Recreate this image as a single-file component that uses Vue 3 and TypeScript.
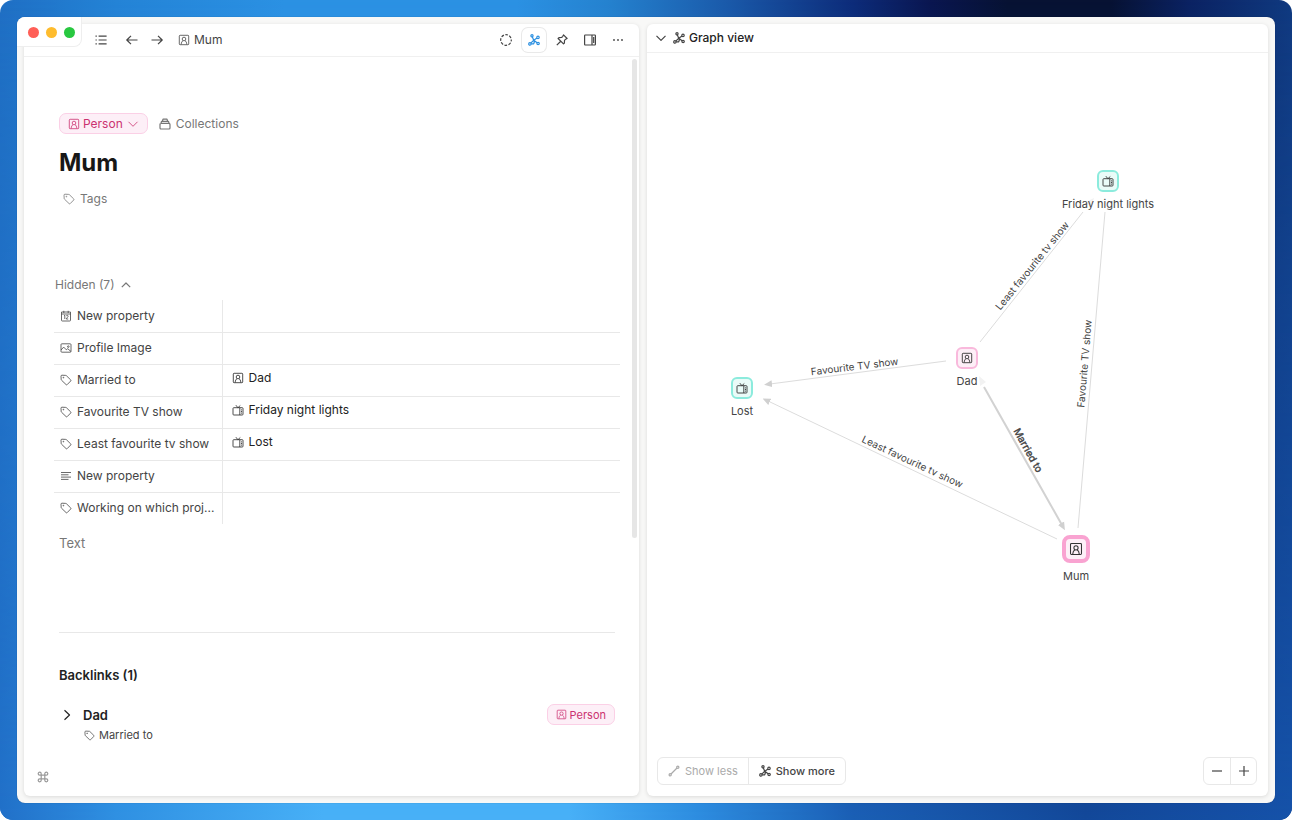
<script setup lang="ts">
import { ref } from 'vue'

interface Property {
  icon: string
  name: string
  value?: string
  valueIcon?: string
}

interface GraphNode {
  label: string
  icon: string
  kind: 'show' | 'person'
  x: number
  y: number
  active?: boolean
}

interface Edge {
  line: [number, number, number, number]
  tip?: boolean
  double?: boolean
  label: string
  x: number
  y: number
  angle: number
}

const properties: Property[] = [
  { icon: 'calendar', name: 'New property' },
  { icon: 'image', name: 'Profile Image' },
  { icon: 'tag', name: 'Married to', value: 'Dad', valueIcon: 'person' },
  { icon: 'tag', name: 'Favourite TV show', value: 'Friday night lights', valueIcon: 'tv' },
  { icon: 'tag', name: 'Least favourite tv show', value: 'Lost', valueIcon: 'tv' },
  { icon: 'text', name: 'New property' },
  { icon: 'tag', name: 'Working on which proj...' },
]

const nodes: GraphNode[] = [
  { label: 'Friday night lights', icon: 'tv', kind: 'show', x: 461, y: 128 },
  { label: 'Dad', icon: 'person', kind: 'person', x: 320, y: 305 },
  { label: 'Lost', icon: 'tv', kind: 'show', x: 95, y: 335 },
  { label: 'Mum', icon: 'person', kind: 'person', x: 429, y: 496, active: true },
]

const edges: Edge[] = [
  { line: [333, 289, 436, 159], label: 'Least favourite tv show', x: 388, y: 215, angle: -51 },
  { line: [431, 475, 458, 159], label: 'Favourite TV show', x: 441, y: 311, angle: -85 },
  { line: [299, 308, 123, 331], tip: true, label: 'Favourite TV show', x: 208, y: 317, angle: -7 },
  { line: [410, 486, 121, 348], tip: true, label: 'Least favourite tv show', x: 264, y: 412, angle: 25 },
  { line: [337, 334, 415, 472], tip: true, double: true, label: 'Married to', x: 378, y: 399, angle: 61 },
]

const open = ref(true)
const body = ref('')
const zoom = ref(1)
</script>

<template>
  <div class="desktop">
    <svg class="sprite" aria-hidden="true">
      <symbol id="person" viewBox="0 0 12 12">
        <rect x="1.300" y="1.300" width="9.400" height="9.400" rx=".8" />
        <circle cx="6" cy="5" r="1.800" />
        <path d="M3.200 10.400c.1-1.900.8-3.100 1.800-3.800M8.800 10.400c-.1-1.900-.8-3.100-1.800-3.800" />
      </symbol>
      <symbol id="tv" viewBox="0 0 12 12">
        <rect x="1" y="3.700" width="10" height="7.300" rx=".8" />
        <path d="M7.800 3.700V11M5.900 3.700 3.900 1.200M5.900 3.700l2.400-2.200M9 5.900h1M9 7.500h1M9 9.100h1" />
      </symbol>
      <symbol id="tag" viewBox="0 0 12 12">
        <path d="M1 2.200a1 1 0 0 1 1-1l3.700.2a1 1 0 0 1 .7.3l4.300 4.200a.8.8 0 0 1 0 1.100l-3.500 3.600a.8.8 0 0 1-1.100 0L1.500 6.200a1 1 0 0 1-.3-.7z" />
        <circle cx="3.400" cy="3.600" r=".4" />
      </symbol>
      <symbol id="calendar" viewBox="0 0 12 12">
        <path d="M1.500 2h9v8.200a.8.8 0 0 1-.8.8H2.300a.8.8 0 0 1-.8-.8zM1.500 4h9M3.800.8V3M8.200.8V3M4 5.800l.8-.5v3.700M6.300 6c.3-.9 2-.8 1.800.3C8 7.200 6.400 8 6.300 9H8.200" />
      </symbol>
      <symbol id="image" viewBox="0 0 12 12">
        <rect x="1" y="1.800" width="10" height="8.400" rx=".8" />
        <path d="m1 8 2.700-2.900 2.600 2.700 1.400-1.100L11 9.500" />
        <circle cx="8.300" cy="4.600" r=".8" />
      </symbol>
      <symbol id="text" viewBox="0 0 12 12">
        <path d="M1 2.500h10M1 4.800h7.500M1 7.100h10M1 9.400h7.500" />
      </symbol>
      <symbol id="graph" viewBox="0 0 12 12">
        <path d="M4.300 2.700 5.600 6M9 4 5.800 6.200 9.100 8.800M5.800 6.200 2.700 9.100M3.200 9.800h2.500l.9-2.500" />
        <circle cx="4" cy="1.700" r="1.100" />
        <circle cx="10" cy="3.400" r="1.200" />
        <circle cx="10.100" cy="9.500" r="1.200" />
        <circle cx="1.900" cy="9.900" r="1.200" />
      </symbol>
      <symbol id="link" viewBox="0 0 12 12">
        <path d="M3 9 9 3" />
        <circle cx="2.200" cy="9.800" r="1.100" />
        <circle cx="9.800" cy="2.200" r="1.100" />
      </symbol>
      <symbol id="list" viewBox="0 0 12 12">
        <path d="M3.600 2.200h8M3.600 6h8M3.600 9.800h8M.5 2.200h1.300M.5 6h1.300M.5 9.800h1.300" />
      </symbol>
      <symbol id="back" viewBox="0 0 12 12"><path d="M11.500 6H1M5 1.800.8 6 5 10.200" /></symbol>
      <symbol id="forward" viewBox="0 0 12 12"><path d="M.5 6H11M7 1.800 11.200 6 7 10.200" /></symbol>
      <symbol id="dashed" viewBox="0 0 12 12">
        <circle cx="6" cy="6" r="5.300" stroke-dasharray="2.700 1.463" stroke-dashoffset="1.350" />
      </symbol>
      <symbol id="pin" viewBox="0 0 12 12">
        <path d="M7.500.9 11.100 4.500 9.700 5.200 8.500 6.400 8.400 9 7.500 9.900 2.100 4.500 3 3.600l2.600-.1L6.800 2.300zM4.500 7.500.8 11.200" />
      </symbol>
      <symbol id="sidebar" viewBox="0 0 12 12">
        <rect x=".6" y="1" width="10.800" height="10" rx=".7" />
        <path d="M8 1v10M9.700 3v6" />
      </symbol>
      <symbol id="dots" viewBox="0 0 12 12">
        <g fill="currentColor" stroke="none">
          <circle cx="2" cy="6" r=".9" />
          <circle cx="6" cy="6" r=".9" />
          <circle cx="10" cy="6" r=".9" />
        </g>
      </symbol>
      <symbol id="stack" viewBox="0 0 12 12">
        <path d="M1 6.400a1 1 0 0 1 1-1h8a1 1 0 0 1 1 1V10a1 1 0 0 1-1 1H2a1 1 0 0 1-1-1zM2 5.200l.5-1.900h7l.5 1.900M3.500 3l.5-1.800h4L8.500 3" />
      </symbol>
      <symbol id="down" viewBox="0 0 12 12"><path d="m1.500 3.800 4.500 4.500 4.500-4.500" /></symbol>
      <symbol id="up" viewBox="0 0 12 12"><path d="M1.800 8.200 6 4l4.200 4.200" /></symbol>
      <symbol id="right" viewBox="0 0 12 12"><path d="M3.500 1.200 8.500 6l-5 4.800" /></symbol>
      <symbol id="minus" viewBox="0 0 12 12"><path d="M1 6h10" /></symbol>
      <symbol id="plus" viewBox="0 0 12 12"><path d="M1 6h10M6 1v10" /></symbol>
      <symbol id="command" viewBox="0 0 12 12">
        <path d="M4.200 4.200h3.600v3.600H4.200zM4.200 4.200H2.700a1.500 1.500 0 1 1 1.500-1.500zM7.800 4.200V2.700a1.500 1.500 0 1 1 1.500 1.500zM7.800 7.800h1.500a1.500 1.500 0 1 1-1.500 1.500zM4.200 7.800v1.500a1.500 1.500 0 1 1-1.500-1.500z" />
      </symbol>
    </svg>

    <div class="window">
      <div class="lights">
        <button class="light red" aria-label="Close"></button>
        <button class="light yellow" aria-label="Minimise"></button>
        <button class="light green" aria-label="Zoom window"></button>
      </div>

      <main class="pane">
        <header class="toolbar">
          <button class="tool" aria-label="Sidebar"><svg class="icon bold"><use href="#list" /></svg></button>
          <nav class="history">
            <button class="tool" aria-label="Back"><svg class="icon bold"><use href="#back" /></svg></button>
            <button class="tool" aria-label="Forward"><svg class="icon bold"><use href="#forward" /></svg></button>
          </nav>
          <a class="crumb" href="#mum"><svg class="icon"><use href="#person" /></svg>Mum</a>
          <div class="tools">
            <button class="tool" aria-label="Focus"><svg class="icon bold"><use href="#dashed" /></svg></button>
            <button class="tool selected" aria-label="Graph"><svg class="icon bold"><use href="#graph" /></svg></button>
            <button class="tool" aria-label="Pin"><svg class="icon bold"><use href="#pin" /></svg></button>
            <button class="tool" aria-label="Side panel"><svg class="icon bold"><use href="#sidebar" /></svg></button>
            <button class="tool" aria-label="More"><svg class="icon bold"><use href="#dots" /></svg></button>
          </div>
        </header>

        <article class="doc">
          <div class="types">
            <button class="pill"><svg class="icon"><use href="#person" /></svg>Person<svg class="icon caret"><use href="#down" /></svg></button>
            <button class="plain"><svg class="icon bold"><use href="#stack" /></svg>Collections</button>
          </div>
          <h1>Mum</h1>
          <button class="plain tags"><svg class="icon"><use href="#tag" /></svg>Tags</button>

          <button class="plain toggle" :aria-expanded="open" @click="open = !open">Hidden (7)<svg class="icon bold"><use href="#up" /></svg></button>
          <table v-if="open" class="props">
            <tbody>
              <tr v-for="(p, i) in properties" :key="i">
                <th scope="row">
                  <div class="cell"><svg class="icon"><use :href="'#' + p.icon" /></svg>{{ p.name }}</div>
                </th>
                <td>
                  <a v-if="p.value" class="cell value" href="#object"><svg class="icon"><use :href="'#' + p.valueIcon" /></svg>{{ p.value }}</a>
                </td>
              </tr>
            </tbody>
          </table>
          <input v-model="body" class="body" type="text" placeholder="Text" aria-label="Text" />

          <section class="backlinks">
            <h2>Backlinks (1)</h2>
            <div class="backlink">
              <button class="expand" aria-label="Expand Dad"><svg class="icon bold"><use href="#right" /></svg></button>
              <a class="who" href="#dad">Dad</a>
              <span class="pill"><svg class="icon"><use href="#person" /></svg>Person</span>
            </div>
            <div class="via"><svg class="icon"><use href="#tag" /></svg>Married to</div>
          </section>
        </article>
        <div class="scrollbar"></div>
        <button class="command" aria-label="Commands"><svg class="icon bold"><use href="#command" /></svg></button>
      </main>

      <aside class="pane">
        <header class="graph-head">
          <svg class="icon bold"><use href="#down" /></svg>
          <svg class="icon bold"><use href="#graph" /></svg>
          <h2>Graph view</h2>
        </header>
        <div class="canvas">
          <svg class="graph" viewBox="0 0 621 743" role="img" aria-label="Graph of related objects">
            <defs>
              <marker id="tip" viewBox="0 0 8 8" refX="2" refY="4" markerWidth="8" markerHeight="8" markerUnits="userSpaceOnUse" orient="auto">
                <path class="tip" d="M0 .5 8 4 0 7.500z" />
              </marker>
            </defs>
            <g :transform="`translate(310 371) scale(${zoom}) translate(-310 -371)`">
              <path class="ghost" d="m447 145-8 4 5 5zM332 323l7 6-6 4z" />
              <g v-for="(e, i) in edges" :key="i">
                <line :class="['edge', { double: e.double }]" :x1="e.line[0]" :y1="e.line[1]" :x2="e.line[2]" :y2="e.line[3]" :marker-end="e.tip ? 'url(#tip)' : undefined" />
                <text :class="['edge-label', { double: e.double }]" :transform="`translate(${e.x} ${e.y}) rotate(${e.angle})`">{{ e.label }}</text>
              </g>
              <g v-for="n in nodes" :key="n.label" :class="['node', n.kind, { active: n.active }]" :transform="`translate(${n.x} ${n.y})`">
                <rect v-if="n.active" class="box" x="-12" y="-12" width="24" height="24" rx="6" />
                <rect v-else class="box" x="-10" y="-10" width="20" height="20" rx="5" />
                <use v-if="n.active" class="glyph" :href="'#' + n.icon" x="-7" y="-7" width="14" height="14" />
                <use v-else class="glyph" :href="'#' + n.icon" x="-6" y="-6" width="12" height="12" />
                <text class="node-label" :y="n.active ? 31 : 27">{{ n.label }}</text>
              </g>
            </g>
          </svg>
          <div class="controls">
            <div class="group">
              <button disabled><svg class="icon bold"><use href="#link" /></svg>Show less</button>
              <button><svg class="icon bold"><use href="#graph" /></svg>Show more</button>
            </div>
            <div class="group zoom">
              <button aria-label="Zoom out" @click="zoom = zoom / 2"><svg class="icon bold"><use href="#minus" /></svg></button>
              <button aria-label="Zoom in" @click="zoom = zoom * 2"><svg class="icon bold"><use href="#plus" /></svg></button>
            </div>
          </div>
        </div>
      </aside>
    </div>
  </div>
</template>

<style>
body {
  margin: 0;
  background: #fff;
}
</style>

<style scoped>
* {
  box-sizing: border-box;
}
.desktop {
  position: relative;
  display: flex;
  min-height: 100vh;
  padding: 17px;
  border-radius: 13px;
  overflow: hidden;
  font-family: Inter, "Liberation Sans", sans-serif;
  font-size: 12px;
  line-height: 20px;
  color: #444;
  background: linear-gradient(90deg, #1f6fc4 0, #2483d6 9%, #2b91e3 22%, #2b91e3 40%, #2582cf 47%, #1b5bab 56%, #0d2c7a 66%, #0a1650 72%, #071233 78%, #071233 86%, #0b2262 92%, #103a80 100%);
}
.desktop::before {
  content: "";
  position: absolute;
  inset: 0;
  background: linear-gradient(90deg, #2170c8 0, #2f90e2 9%, #48b0f7 25%, #48b0f7 44%, #2d8de0 54%, #1a5fb5 66%, #12489a 84%, #1552a9 100%);
  mask-image: linear-gradient(transparent, #000);
}
.sprite {
  position: absolute;
  width: 0;
  height: 0;
}
button {
  display: inline-flex;
  align-items: center;
  padding: 0;
  border: 0;
  background: none;
  font: inherit;
  color: inherit;
}
a {
  color: inherit;
  text-decoration: none;
}
h1,
h2 {
  margin: 0;
}
.icon {
  flex: none;
  width: 12px;
  height: 12px;
  fill: none;
  stroke: currentColor;
  stroke-width: 0.8;
  stroke-linejoin: round;
}
.icon.bold {
  stroke-width: 1.2;
}
.window {
  position: relative;
  flex: 1;
  display: grid;
  grid-template-columns: 615fr 621fr;
  gap: 8px;
  padding: 7px;
  border-radius: 8px;
  background: #f8f8f7;
  box-shadow: 0 0 1px #0006;
}
.pane {
  position: relative;
  display: flex;
  flex-direction: column;
  min-width: 0;
  border-radius: 6px;
  background: #fff;
  box-shadow: 0 1px 4px #0000001f;
}
.lights {
  position: absolute;
  z-index: 1;
  top: 0;
  left: 0;
  display: flex;
  gap: 7px;
  padding: 10px 6px 8px 11px;
  border: 1px solid #eee;
  border-width: 0 1px 1px 0;
  border-radius: 8px 0;
  background: #fff;
}
.light {
  width: 11px;
  height: 11px;
  border-radius: 50%;
}
.red { background: #ff5f57; }
.yellow { background: #febc2e; }
.green { background: #28c840; }
.toolbar {
  display: flex;
  align-items: center;
  height: 33px;
  padding: 0 9px 0 65px;
  border-bottom: 1px solid #f0f0f0;
}
.tool {
  justify-content: center;
  width: 24px;
  height: 24px;
}
.tool.selected {
  border-radius: 6px;
  color: #2b8fe0;
  box-shadow: 0 0 0 1px #e9e9e9;
}
.history {
  display: flex;
  gap: 1px;
  margin-left: 7px;
}
.crumb {
  display: flex;
  align-items: center;
  gap: 4px;
  margin-left: 9px;
}
.tools {
  display: flex;
  gap: 4px;
  margin-left: auto;
}
.doc {
  padding: 56px 24px 24px 35px;
}
.types {
  display: flex;
  gap: 11px;
}
.pill {
  display: inline-flex;
  align-items: center;
  gap: 3px;
  height: 21px;
  padding: 0 8px;
  border: 1px solid #fbd0e6;
  border-radius: 7px;
  background: #fdeff7;
  color: #cb3270;
}
.caret {
  margin-left: 1px;
}
.plain {
  gap: 5px;
  color: #777;
}
h1 {
  margin-top: 13px;
  font-size: 24px;
  line-height: 32px;
  font-weight: 700;
  color: #171717;
}
.tags {
  display: flex;
  margin: 10px 0 66px 4px;
}
.toggle {
  display: flex;
  margin-left: -4px;
}
.props {
  width: calc(100% + 10px);
  margin: 5px 0 0 -5px;
  border-collapse: collapse;
  table-layout: fixed;
}
.props th,
.props td {
  height: 32px;
  padding: 0;
  border-bottom: 1px solid #e8e8e8;
}
.props tr:last-child > * {
  border-bottom: 0;
}
.props th {
  width: 168px;
  border-right: 1px solid #e8e8e8;
  font-weight: 400;
  text-align: left;
  white-space: nowrap;
}
.cell {
  display: flex;
  align-items: center;
  gap: 5px;
  padding: 0 6px;
}
.value {
  padding: 0 9px 5px;
  color: #222;
}
.body {
  display: block;
  width: 100%;
  height: 20px;
  margin-top: 9px;
  padding: 0;
  border: 0;
  outline: 0;
  background: none;
  font: inherit;
  font-size: 13px;
  color: #333;
}
.body::placeholder {
  color: #777;
  opacity: 1;
}
.backlinks {
  margin-top: 79px;
  padding-top: 32px;
  border-top: 1px solid #e8e8e8;
}
.backlinks h2,
.who {
  font-size: 13px;
  font-weight: 600;
  color: #222;
}
.backlink {
  display: flex;
  align-items: center;
  margin-top: 19px;
  color: #222;
}
.expand {
  width: 24px;
  padding-left: 2px;
}
.who {
  flex: 1;
}
.backlink .pill,
.via {
  font-size: 11px;
}
.via {
  display: flex;
  align-items: center;
  gap: 4px;
  padding-left: 25px;
}
.backlink .pill .icon,
.via .icon {
  width: 11px;
  height: 11px;
}
.scrollbar {
  position: absolute;
  top: 35px;
  right: 2px;
  width: 5px;
  height: 62%;
  border-radius: 3px;
  background: #e6e6e6;
}
.command {
  position: absolute;
  left: 13px;
  bottom: 13px;
  color: #999;
}
.graph-head {
  display: flex;
  align-items: center;
  gap: 6px;
  height: 29px;
  padding: 0 8px;
  border-bottom: 1px solid #f0f0f0;
}
.graph-head h2 {
  margin-left: -2px;
  font-size: 12px;
  font-weight: 500;
  color: #222;
}
.canvas {
  position: relative;
  flex: 1;
  display: flex;
}
.graph {
  width: 100%;
}
.edge {
  stroke: #dcdcdc;
  stroke-width: 1;
}
.edge.double {
  stroke: #d2d2d2;
  stroke-width: 2;
}
.tip {
  fill: #d0d0d0;
}
.ghost {
  fill: #f2f2f2;
}
.edge-label,
.node-label {
  fill: #444;
  text-anchor: middle;
}
.edge-label {
  font-size: 10px;
}
.edge-label.double {
  stroke: #444;
  stroke-width: 0.4;
}
.node-label {
  font-size: 11px;
}
.box {
  stroke-width: 2;
}
.glyph {
  fill: none;
  stroke: #333;
  stroke-width: 0.9;
}
.show .box {
  fill: #eafbf8;
  stroke: #8cebdd;
}
.person .box {
  fill: #fdeff7;
  stroke: #f9b9dc;
}
.active .box {
  stroke: #f9a3d1;
  stroke-width: 4;
}
.controls {
  position: absolute;
  right: 11px;
  bottom: 11px;
  left: 10px;
  display: flex;
  justify-content: space-between;
}
.group {
  display: flex;
  height: 28px;
  border: 1px solid #e8e8e8;
  border-radius: 6px;
  font-size: 11px;
}
.group button {
  gap: 5px;
  padding: 0 10px;
}
.group button + button {
  border-left: 1px solid #e8e8e8;
  font-weight: 500;
  color: #444;
}
.group button:disabled {
  color: #aaa;
}
.zoom button {
  justify-content: center;
  width: 26px;
  padding: 0;
}
</style>
